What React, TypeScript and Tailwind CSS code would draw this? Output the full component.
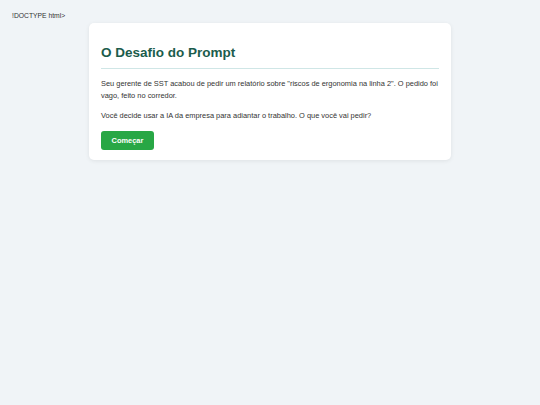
export default function App() {
  return (
    <div className="min-h-screen bg-[#f0f4f7] px-[12px] pt-[12px] font-['Liberation_Sans',Arial,sans-serif] text-[#333333]">
      <div className="text-[6.75px] leading-[8px]">!DOCTYPE html&gt;</div>
      <div className="mx-auto mt-[3px] w-[362px] rounded-[5px] bg-white px-[12px] pt-[12px] pb-[10px] shadow-[0_1px_4px_rgba(0,0,0,0.08)]">
        <h1 className="mt-[10px] border-b border-[#cfe6e6] pb-[7px] text-[13.5px] font-bold leading-[16px] text-[#1b5c4c]">
          O Desafio do Prompt
        </h1>
        <p className="mt-[9px] text-[7.43px] leading-[12px]">
          Seu gerente de SST acabou de pedir um relatório sobre "riscos de ergonomia na linha 2". O pedido foi vago, feito
          no corredor.
        </p>
        <p className="mt-[8px] text-[7.43px] leading-[12px]">
          Você decide usar a IA da empresa para adiantar o trabalho. O que você vai pedir?
        </p>
        <button className="mt-[9px] flex h-[19px] w-[53px] items-center justify-center rounded-[3px] bg-[#28a745] text-[7.43px] font-bold text-white">
          Começar
        </button>
      </div>
    </div>
  );
}
